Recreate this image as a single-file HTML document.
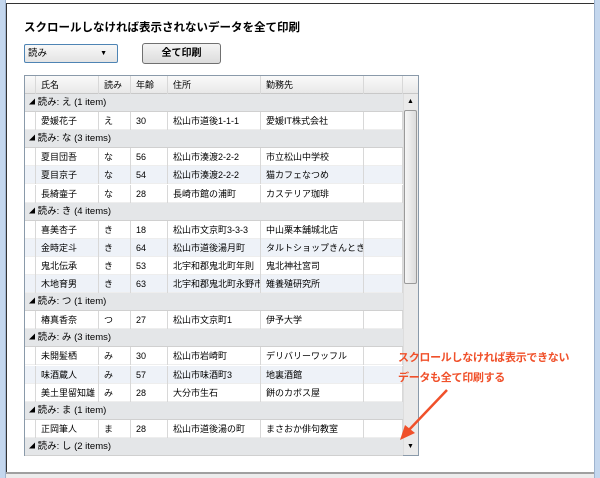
<!DOCTYPE html>
<html><head><meta charset="utf-8"><style>
*{margin:0;padding:0;box-sizing:border-box}
body{width:600px;height:478px;background:#fff;position:relative;overflow:hidden;font-family:"Liberation Sans","Noto Sans CJK JP",sans-serif;font-size:10px;color:#000}
.a{position:absolute}
.row{position:absolute;left:25px;width:378px;height:18px;font-size:9px}
.c{position:absolute;top:0;height:18px;line-height:18px;border-right:1px solid #d8d8d8;padding-left:5px;white-space:nowrap;overflow:hidden}
.g{position:absolute;left:25px;width:378px;height:18px;background:#e4e6e8;line-height:18px;padding-left:4px;border-bottom:1px solid #d0d0d0;font-size:9.5px}
</style></head><body>
<div class="a" style="left:0;top:0;width:6px;height:478px;background:#c4d7ee;border-right:1px solid #9fb4cf"></div>
<div class="a" style="right:0;top:0;width:6px;height:478px;background:#c4d7ee;border-left:1px solid #9fb4cf"></div>
<div class="a" style="left:6px;top:3px;width:588px;height:1px;background:#333"></div>
<div class="a" style="left:6px;top:4px;width:1px;height:468px;background:#333"></div>
<div class="a" style="left:6px;top:472px;width:588px;height:6px;background:#ececec;border-top:2px solid #a0a0a0"></div>
<div class="a" style="left:24px;top:19px;font-size:11.5px;font-weight:bold">スクロールしなければ表示されないデータを全て印刷</div>
<div class="a" style="left:24px;top:44px;width:94px;height:19px;border:1px solid #4e84b4;border-radius:2px;background:linear-gradient(#f8f8f8,#e4e4e4);padding-left:3px;line-height:17px;font-size:9.5px">読み<span style="position:absolute;right:10px;top:0;font-size:7px">▼</span></div>
<div class="a" style="left:142px;top:43px;width:79px;height:21px;border:1px solid #707070;border-radius:3px;background:linear-gradient(#f4f4f4,#dcdcdc);text-align:center;line-height:19px;font-weight:bold">全て印刷</div>
<div class="a" style="left:24px;top:75px;width:395px;height:381px;border:1px solid #8a9aaa;background:#fff"></div>
<div class="a" style="left:25px;top:76px;width:393px;height:18px;background:linear-gradient(#fafafa,#e8e8e8);border-bottom:1px solid #c8c8c8"></div>
<div class="row" style="top:76px">
<div class="c" style="left:0;width:11px"></div><div class="c" style="left:11px;width:63px">氏名</div><div class="c" style="left:74px;width:32px">読み</div><div class="c" style="left:106px;width:37px">年齢</div><div class="c" style="left:143px;width:93px">住所</div><div class="c" style="left:236px;width:103px">勤務先</div><div class="c" style="left:339px;width:39px"></div></div>
<div id="b"></div>
<div class="a" style="left:403px;top:94px;width:15px;height:361px;background:#eaeaea;border-left:1px solid #ddd"></div>
<div class="a" style="left:403px;top:94px;width:15px;height:16px;text-align:center;font-size:7px;line-height:16px">▲</div>
<div class="a" style="left:404px;top:110px;width:13px;height:174px;border:1px solid #9a9a9a;border-radius:2px;background:linear-gradient(90deg,#f6f6f6,#dcdcdc)"></div>
<div class="a" style="left:403px;top:439px;width:15px;height:16px;text-align:center;font-size:7px;line-height:16px">▼</div>
<div class="a" style="left:398px;top:348px;color:#f0502a;font-size:11px;line-height:20px;font-weight:bold;letter-spacing:-0.3px">スクロールしなければ表示できない<br>データも全て印刷する</div>
<svg class="a" style="left:395px;top:385px" width="60" height="60"><line x1="52" y1="5" x2="12" y2="47" stroke="#f0502a" stroke-width="2.5"/><polygon points="5,55 10,40 20,48" fill="#f0502a"/></svg>
<script>
var d=[["え",1,[["愛媛花子","え","30","松山市道後1-1-1","愛媛IT株式会社"]]],["な",3,[["夏目団吾","な","56","松山市湊渡2-2-2","市立松山中学校"],["夏目京子","な","54","松山市湊渡2-2-2","猫カフェなつめ"],["長綺壷子","な","28","長崎市館の浦町","カステリア珈琲"]]],["き",4,[["喜美杏子","き","18","松山市文京町3-3-3","中山栗本舗城北店"],["金時定斗","き","64","松山市道後湯月町","タルトショップきんとき"],["鬼北伝承","き","53","北宇和郡鬼北町年則","鬼北神社宮司"],["木地育男","き","63","北宇和郡鬼北町永野市","雉養殖研究所"]]],["つ",1,[["椿真香奈","つ","27","松山市文京町1","伊予大学"]]],["み",3,[["未開髪栖","み","30","松山市岩崎町","デリバリーワッフル"],["味酒蔵人","み","57","松山市味酒町3","地裏酒館"],["美土里留知雄","み","28","大分市生石","餅のカボス屋"]]],["ま",1,[["正岡筆人","ま","28","松山市道後湯の町","まさおか俳句教室"]]],["し",2,[]]];
var h="",y=94,L=[0,11,74,106,143,236,339],W=[11,63,32,37,93,103,39];
d.forEach(function(g){h+='<div class="g" style="top:'+y+'px"><span style="font-size:6px;vertical-align:1px">◢</span> 読み: '+g[0]+' ('+g[1]+' item'+(g[1]>1?'s':'')+')</div>';y+=18.1;
g[2].forEach(function(r,i){h+='<div class="row" style="top:'+y+'px;background:'+(i%2?'#eef2f8':'#fff')+';border-bottom:1px solid #eee">';
for(var k=0;k<7;k++){var t=k==0||k==6?'':r[k-1];h+='<div class="c" style="left:'+L[k]+'px;width:'+W[k]+'px">'+t+'</div>';}
h+='</div>';y+=18.1;});});
document.getElementById('b').innerHTML=h;
</script>
</body></html>
